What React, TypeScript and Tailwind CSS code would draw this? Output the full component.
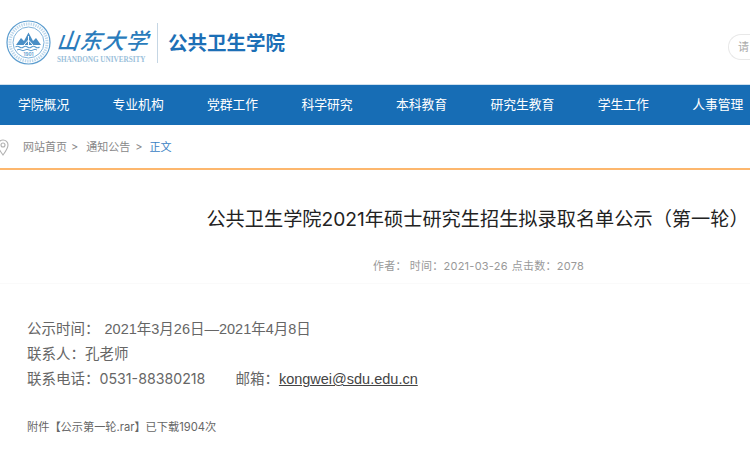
const FONT = "font-['Inter','Noto_Sans_CJK_SC',sans-serif]";
const ARIAL = "font-['Liberation_Sans','Noto_Sans_CJK_SC',sans-serif]";

const NAV = ["学院概况", "专业机构", "党群工作", "科学研究", "本科教育", "研究生教育", "学生工作", "人事管理"];

function Emblem() {
  return (
    <svg width="45" height="45" viewBox="0 0 45 45" fill="none" stroke="#5c9dcf" className="shrink-0">
      <circle cx="22.5" cy="22.5" r="21.5" strokeWidth="1.2" />
      <circle cx="22.5" cy="22.5" r="18.5" strokeWidth="3" strokeDasharray="1.4 1" opacity="0.4" />
      <circle cx="22.5" cy="22.5" r="15.5" strokeWidth="0.8" />
      <path d="M10 25 L15 18 L18 21 L22.5 12.5 L27 21 L30 18 L35 25 Z" fill="#4a8fc6" stroke="none" />
      <path d="M22.5 16 V30 M18 25 L22.5 20 L27 25" stroke="#fff" strokeWidth="1" />
      <path d="M9.5 27 q2 -1.5 4 0 t4 0 t4 0 t4 0 t4 0 t4 0" strokeWidth="1.1" />
      <path d="M11 30 q2 -1.5 4 0 t4 0 t4 0 t4 0 t4 0" strokeWidth="1" />
      <text x="22.5" y="36" textAnchor="middle" fontSize="4.5" fill="#5c9dcf" stroke="none" fontWeight="700">1901</text>
    </svg>
  );
}

function Logo() {
  return (
    <div className="flex items-center h-[85px] pl-[6px]">
      <Emblem />
      <div className="ml-[6px] w-[95px] flex flex-col items-start">
        <div className="h-[34px] text-[22px] leading-[34px] tracking-[1px] text-[#2a7cbc] italic whitespace-nowrap font-['Noto_Sans_CJK_SC',sans-serif] font-medium -skew-x-6">
          山东大学
        </div>
        <div className="text-[7.2px] leading-[8px] font-bold text-[#9bbfdb] whitespace-nowrap font-['Liberation_Serif',serif]">
          SHANDONG UNIVERSITY
        </div>
      </div>
      <div className="w-px h-[40px] bg-[#c5d6e4] ml-[5px]" />
      <div className="ml-[10px] text-[19.5px] leading-[24px] font-bold text-[#1c6fb6] whitespace-nowrap">公共卫生学院</div>
    </div>
  );
}

function Header() {
  return (
    <header className="h-[84px] flex justify-between">
      <Logo />
      <div className="mt-[34px] ml-auto w-[22px] h-[26px] border border-r-0 border-[#e8e8e8] rounded-l-[13px] pl-[9px] text-[11px] leading-[24px] text-[#aaa] overflow-hidden whitespace-nowrap">
        请
      </div>
    </header>
  );
}

function Nav() {
  return (
    <nav className="h-[41px] bg-[#176db5] border-t border-[#cfe0ee] flex items-center gap-[43.3px] pl-[18px] text-[12.8px] text-white whitespace-nowrap overflow-hidden">
      {NAV.map((item) => (
        <a key={item}>{item}</a>
      ))}
    </nav>
  );
}

function Breadcrumb() {
  return (
    <div className="h-[45px] pt-[2px] border-b-2 border-[#fdb76d] flex items-center text-[11px] text-[#888] whitespace-nowrap overflow-hidden">
      <svg width="12" height="17" viewBox="0 0 12 17" fill="none" stroke="#b0b0b0" strokeWidth="1.1" className="-ml-[3px] shrink-0">
        <path d="M6 16 C3 12 1 9 1 6 a5 5 0 0 1 10 0 C11 9 9 12 6 16 Z" />
        <circle cx="6" cy="6" r="2" />
      </svg>
      <span className="ml-[14px]">网站首页</span>
      <span className="ml-[4px]">&gt;</span>
      <span className="ml-[8px]">通知公告</span>
      <span className="ml-[5px]">&gt;</span>
      <span className="ml-[7px] text-[#3a82c4]">正文</span>
    </div>
  );
}

function Article() {
  return (
    <main className="text-[#666]">
      <div className="w-[955px] border-b border-[#fafafa] h-[114px]">
        <h1 className="pt-[36px] text-center text-[19.2px] leading-[26px] text-[#222] whitespace-nowrap">
          公共卫生学院2021年硕士研究生招生拟录取名单公示（第一轮）
        </h1>
        <div className="mt-[26px] ml-[373px] text-[11px] leading-[16px] tracking-[0.25px] text-[#999] whitespace-nowrap">
          <span>作者：</span>
          <span className="ml-[3px]">时间：2021-03-26</span>
          <span className="ml-[4px]">点击数：2078</span>
        </div>
      </div>
      <div className="pl-[27px] pt-[32px] text-[14.5px] leading-[25px] whitespace-nowrap">
        <p className="h-[25px]">
          公示时间：<span className={`ml-[5px] ${ARIAL}`}>2021年3月26日—2021年4月8日</span>
        </p>
        <p className="h-[25px]">联系人：孔老师</p>
        <p className="h-[25px]">
          联系电话：<span className="text-[14.2px]">0531-88380218</span>
          <span className="ml-[30px]">邮箱：</span>
          <a className={`underline text-[#444] ${ARIAL}`}>kongwei@sdu.edu.cn</a>
        </p>
        <p className="mt-[28px] text-[11.2px] leading-[16px]">附件【公示第一轮.rar】已下载1904次</p>
      </div>
    </main>
  );
}

export default function App() {
  return (
    <div className={`w-[750px] h-[453px] bg-white overflow-hidden ${FONT}`}>
      <Header />
      <Nav />
      <Breadcrumb />
      <Article />
    </div>
  );
}
